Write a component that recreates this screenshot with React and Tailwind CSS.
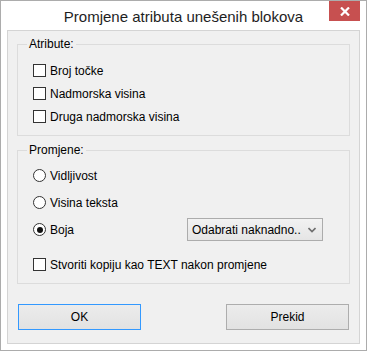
import React from "react";

const font = { fontFamily: '"Liberation Sans", Arial, sans-serif' };

function CheckRow({ label }) {
  return (
    <div className="flex items-center h-[23px] pl-[15px]">
      <span className="w-[13px] h-[13px] border border-[#333333] bg-white flex-shrink-0" />
      <span className="ml-[4px] text-[12px] text-black leading-none">{label}</span>
    </div>
  );
}

function RadioRow({ label, checked, children }) {
  return (
    <div className="flex items-center h-[27px] pl-[15px]">
      <span className="w-[13px] h-[13px] rounded-full border border-[#333333] bg-white flex items-center justify-center flex-shrink-0">
        {checked && <span className="w-[6px] h-[6px] rounded-full bg-[#111111]" />}
      </span>
      <span className="ml-[4px] text-[12px] text-black leading-none">{label}</span>
      {children}
    </div>
  );
}

function Group({ title, className, children }) {
  return (
    <fieldset className={`border border-[#dcdcdc] p-0 m-0 ${className}`}>
      <legend className="ml-[9px] px-[2px] text-[12px] leading-[14px] text-black">{title}</legend>
      {children}
    </fieldset>
  );
}

export default function App() {
  return (
    <div className="w-[367px] h-[351px] border border-[#acacac] bg-white relative flex flex-col select-none" style={font}>
      {/* Title bar */}
      <div className="h-[29px] flex items-center justify-center flex-shrink-0">
        <span className="text-[15px] text-[#1e1e1e] leading-none mt-[1px]">Promjene atributa unešenih blokova</span>
      </div>
      <div className="absolute top-0 right-[6px] w-[31px] h-[20px] bg-[#c75050] flex items-center justify-center">
        <svg width="10" height="9" viewBox="0 0 10 9">
          <path d="M1 0.5 L9 8.5 M9 0.5 L1 8.5" stroke="white" strokeWidth="2.2" />
        </svg>
      </div>

      {/* Client area */}
      <div className="mx-[6px] h-[314px] border border-[#d4d4d4] bg-[#f0f0f0] flex flex-col px-[9px]">
        <Group title="Atribute:" className="mt-[6px] h-[99px]">
          <div className="mt-[8px]">
            <CheckRow label="Broj točke" />
            <CheckRow label="Nadmorska visina" />
            <CheckRow label="Druga nadmorska visina" />
          </div>
        </Group>

        <Group title="Promjene:" className="mt-[7px] h-[141px]">
          <div className="mt-[5px]">
            <RadioRow label="Vidljivost" />
            <RadioRow label="Visina teksta" />
            <RadioRow label="Boja" checked>
              <div className="ml-auto mr-[26px] w-[136px] h-[23px] border border-[#acacac] bg-gradient-to-b from-[#f2f2f2] to-[#e5e5e5] flex items-center pl-[4px] pr-[6px]">
                <span className="text-[12px] text-black leading-none">Odabrati naknadno..</span>
                <svg className="ml-auto" width="8" height="6" viewBox="0 0 8 6">
                  <path d="M0.5 1 L4 4.5 L7.5 1" stroke="#6d6d6d" strokeWidth="1.6" fill="none" />
                </svg>
              </div>
            </RadioRow>
            <div className="mt-[8px] flex items-center h-[27px] pl-[15px]">
              <span className="w-[13px] h-[13px] border border-[#333333] bg-white flex-shrink-0" />
              <span className="ml-[4px] text-[12px] text-black leading-none">Stvoriti kopiju kao TEXT nakon promjene</span>
            </div>
          </div>
        </Group>

        <div className="mt-[20px] flex justify-between px-[1px]">
          <button className="w-[123px] h-[26px] border border-[#3399ff] bg-gradient-to-b from-[#ececec] to-[#e2e2e2] text-[12px] text-black">OK</button>
          <button className="w-[123px] h-[26px] border border-[#adadad] bg-gradient-to-b from-[#ececec] to-[#e2e2e2] text-[12px] text-black">Prekid</button>
        </div>
      </div>
    </div>
  );
}
